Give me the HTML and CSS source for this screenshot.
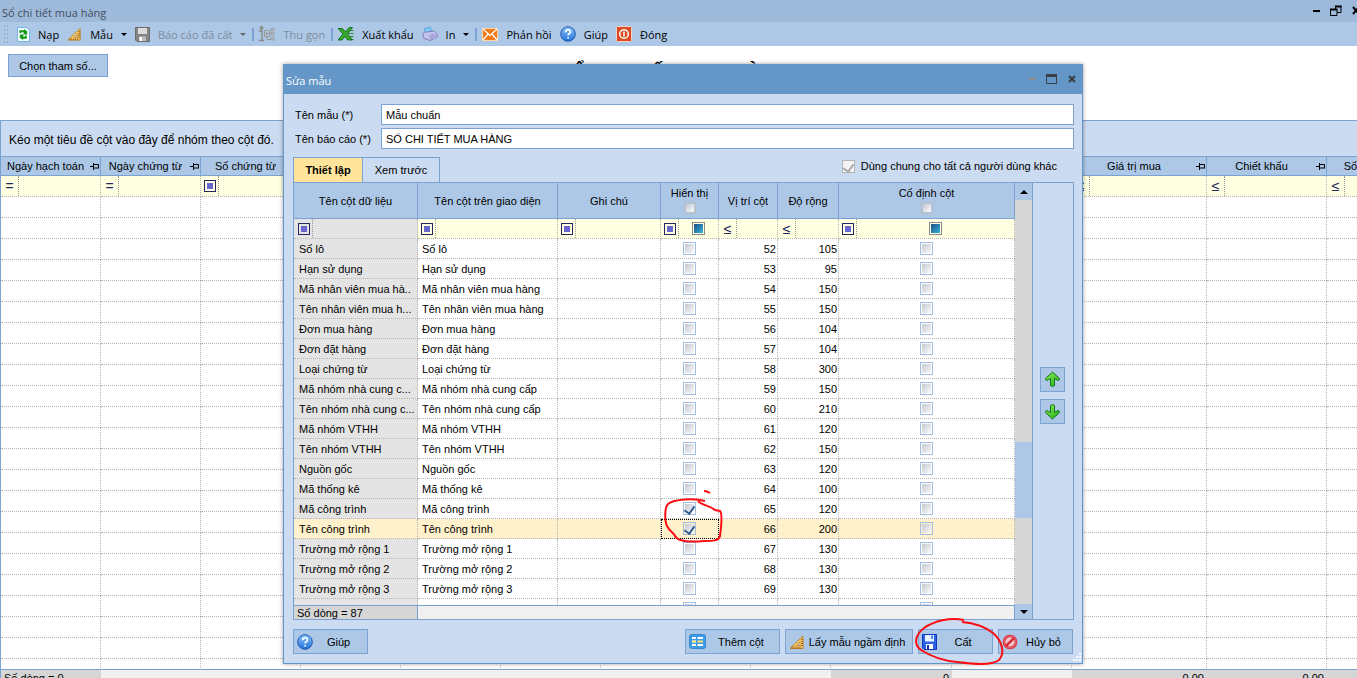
FILE: index.html
```
<!DOCTYPE html>
<html lang="vi">
  <head>
    <meta charset="utf-8">
    <link rel="stylesheet" href="styles.css">
    <title>Sổ chi tiết mua hàng</title>
  </head>
  <body>
    <svg class="defs">
      <linearGradient id="blueBall" x1="0" y1="0" x2="0" y2="1"><stop offset="0" stop-color="#8cc4ff"/><stop offset="1" stop-color="#2272d8"/></linearGradient>
      <linearGradient id="green" x1="0" y1="0" x2="1" y2="1"><stop offset="0" stop-color="#8df05a"/><stop offset="1" stop-color="#18b010"/></linearGradient>
      <symbol id="help" viewBox="0 0 16 16">
        <circle cx="8" cy="8" r="7.3" fill="url(#blueBall)" stroke="#2058a8"/>
        <path d="M5.7 6.2Q5.8 3.8 8.1 3.8T10.4 5.9Q10.4 7 9.1 7.8Q8.1 8.4 8.1 9.5M8.1 11V12.6" fill="none" stroke="#fff" stroke-width="1.6"/>
      </symbol>
      <symbol id="ruler" viewBox="0 0 16 16">
        <path d="M1 14.5L14 2V14.5Z" fill="#f8c765" stroke="#c08428"/>
        <path d="M7.500 11.500L11 8V11.500Z" fill="#c5d9f0" stroke="#b87820" stroke-width=".7"/>
        <path d="M3 14.500v-2M5 14.500v-2M7 14.500v-2M9 14.500v-2M11 14.500v-2M12 5.500h2M12 7.500h2M12 9.500h2M12 11.500h2" stroke="#8a5510" stroke-width=".8"/>
      </symbol>
      <symbol id="pin" viewBox="0 0 9 7">
        <path d="M0 3.5H3M3.5 0V7M3.5 1.5H8.5V5M3.5 5H9" fill="none" stroke="#000"/>
      </symbol>
    </svg>

    <div class="window">
      <header class="titlebar">
        <span>Sổ chi tiết mua hàng</span>
        <svg class="window-controls" width="44" height="12" viewBox="0 0 44 12">
          <path d="M0 6h7" stroke="#000" stroke-width="2"/>
          <path d="M22.5 5V1.5H28M28 0.5V7.5H24M17.5 4.5H24V10.5H17.5Z" fill="none" stroke="#000"/>
          <path d="M17 4.500H24.500M22 1.500H28.500" stroke="#000" stroke-width="2"/>
          <path d="M40 2l6 7M46 2l-6 7" stroke="#000" stroke-width="2"/>
        </svg>
      </header>

      <nav class="toolbar">
        <span class="grip"></span>
        <button class="tool">
          <svg width="13" height="15" viewBox="0 0 14 16"><path d="M.5.500H10.500L13.500 3.500V15.500H.5Z" fill="#f5fbff" stroke="#6eaedb"/><path d="M3.500 6.500V4.500H8M5 11.500H9.500V9" fill="none" stroke="#159b18" stroke-width="2"/><path d="M7.500 2L11 4.500V8H7ZM6.500 14L3 11.500V8H7Z" fill="#159b18"/></svg>
          Nạp
        </button>
        <button class="tool">
          <svg width="15" height="16"><use href="#ruler"/></svg>
          Mẫu <i class="caret"></i>
        </button>
        <button class="tool" disabled>
          <svg width="15" height="16" viewBox="0 0 15 16"><path d="M.5 1.500H14.500V15.500H2L.5 14Z" fill="#858585" stroke="#6c6c6c"/><path d="M3 2H12V8H3Z" fill="#dcdcdc"/><path d="M4 10.500H11V15H4Z" fill="#bbb"/><path d="M4.500 11H7V15H4.500Z" fill="#fff"/></svg>
          Báo cáo đã cất <i class="caret"></i>
        </button>
        <span class="separator"></span>
        <button class="tool" disabled>
          <svg width="16" height="16" viewBox="0 0 16 16"><path d="M0 5H3V14M0 14.500H5M1.500 1H3.500V3H1.500Z" fill="none" stroke="#888" stroke-width="1.400"/><path d="M5.500 4.500H10.500V10.500H5.500ZM6.500 7.500H9.500M8 6V9M11 7.500H12M8 10.500V13.500H12M12 2.500H15V5H12ZM12 6.500H15V9H12ZM12 11.500H15V14H12Z" fill="none" stroke="#999"/></svg>
          Thu gọn
        </button>
        <span class="separator"></span>
        <button class="tool">
          <svg width="16" height="16" viewBox="0 0 16 16"><path d="M9 4.500H15.500M9 7.500H15.500M10 10.500H15.500M9 13.500H15.500" stroke="#2f8c34"/><path d="M0 2.500H4.500L7.500 6 11 1.500H14.500L9.500 8 14.500 14H9.500L7 10.500 4 14H0L5 8Z" fill="#35a82d" stroke="#0d6315" stroke-width=".8"/></svg>
          Xuất khẩu
        </button>
        <button class="tool">
          <svg width="16" height="16" viewBox="0 0 16 16"><path d="M2 3L8 .8 10 5 4 8Z" fill="#7ecbf5" stroke="#4b9ed6" stroke-width=".7"/><path d="M.8 8Q2 5 5 6L12 5Q16 7 15.300 11L8 14.500 2 12.500Z" fill="#c5c4ec" stroke="#8080bd"/><path d="M7 9Q11 6 14.500 9V12L8 14Z" fill="#a9a7db"/></svg>
          In <i class="caret"></i>
        </button>
        <span class="separator"></span>
        <button class="tool">
          <svg width="16" height="13" viewBox="0 0 16 13"><path d="M.5.500H15.500V12.500H.5Z" fill="#f47a18" stroke="#ffd6a8"/><path d="M1 1L8 7.500 15 1M1 12L6 6M15 12L10 6" fill="none" stroke="#fff" stroke-width="1.200"/></svg>
          Phản hồi
        </button>
        <button class="tool">
          <svg width="16" height="16"><use href="#help"/></svg>
          Giúp
        </button>
        <button class="tool">
          <svg width="16" height="16" viewBox="0 0 16 16"><rect x=".5" y=".5" width="15" height="15" rx="1" fill="#dc4a24" stroke="#f5d3c8"/><circle cx="8" cy="8" r="4.300" fill="none" stroke="#fff" stroke-width="1.500"/><path d="M8 5.500v5" stroke="#fff" stroke-width="1.500"/></svg>
          Đóng
        </button>
      </nav>

      <section class="report-head">
        <button class="btn btn-params">Chọn tham số...</button>
        <h1>SỔ CHI TIẾT MUA HÀNG</h1>
      </section>

      <main class="report">
        <p class="group-hint">Kéo một tiêu đề cột vào đây để nhóm theo cột đó.</p>
        <div class="report-grid">
          <table class="grid back-grid">
            <colgroup id="backCols"></colgroup>
            <thead id="backHead"></thead>
            <tbody id="backBody"></tbody>
          </table>
        </div>
        <div class="report-totals">
          <table class="back-totals">
            <tbody><tr id="backTotals"></tr></tbody>
          </table>
        </div>
      </main>
    </div>

    <div class="dialog" role="dialog" aria-labelledby="dialogTitle">
      <header class="dialog-title">
        <span id="dialogTitle">Sửa mẫu</span>
        <svg width="50" height="12" viewBox="0 0 50 12">
          <path d="M1 6h7" stroke="#8c8c8c" stroke-width="2"/>
          <path d="M18.500 1.500H28.500V10.500H18.500Z" fill="none" stroke="#3b4048"/>
          <path d="M18 2.500H29" stroke="#3b4048" stroke-width="3"/>
          <path d="M41 3l6 6M47 3l-6 6" stroke="#3b4048" stroke-width="2.200"/>
        </svg>
      </header>

      <form class="fields">
        <label for="templateName">Tên mẫu (*)</label>
        <input id="templateName" type="text" value="Mẫu chuẩn">
        <label for="reportName">Tên báo cáo (*)</label>
        <input id="reportName" type="text" value="SỔ CHI TIẾT MUA HÀNG">
      </form>

      <div class="tabs">
        <button class="tab active">Thiết lập</button>
        <button class="tab">Xem trước</button>
        <label class="share"><input type="checkbox" class="check" checked disabled> Dùng chung cho tất cả người dùng khác</label>
      </div>

      <div class="panel">
        <div class="list">
          <div class="list-scroll">
            <table class="grid list-grid">
              <colgroup>
                <col class="w-data"><col class="w-label"><col class="w-note"><col class="w-show"><col class="w-pos"><col class="w-width"><col>
              </colgroup>
              <thead>
                <tr class="heads">
                  <th>Tên cột dữ liệu</th>
                  <th>Tên cột trên giao diện</th>
                  <th>Ghi chú</th>
                  <th><label>Hiển thị<input type="checkbox" class="check"></label></th>
                  <th>Vị trí cột</th>
                  <th>Độ rộng</th>
                  <th><label>Cố định cột<input type="checkbox" class="check"></label></th>
                </tr>
                <tr class="filters">
                  <td class="locked"><span class="op"><i class="box"></i></span></td>
                  <td><span class="op"><i class="box"></i></span></td>
                  <td><span class="op"><i class="box"></i></span></td>
                  <td><div class="filter"><span class="op"><i class="box"></i></span><i class="mixed"></i></div></td>
                  <td><span class="op">≤</span></td>
                  <td><span class="op">≤</span></td>
                  <td><div class="filter"><span class="op"><i class="box"></i></span><i class="mixed"></i></div></td>
                </tr>
              </thead>
              <tbody id="listBody"></tbody>
            </table>
          </div>
          <div class="list-total"><span>Số dòng = 87</span></div>
        </div>
        <div class="scrollbar">
          <button class="arrow" aria-label="Lên"><i class="tri up"></i></button>
          <div class="track"><div class="thumb"></div></div>
          <button class="arrow arrow-down" aria-label="Xuống"><i class="tri"></i></button>
        </div>
        <div class="movers">
          <button class="btn" aria-label="Chuyển lên">
            <svg width="17" height="17" viewBox="0 0 17 17"><path d="M8.500 1L15.500 7.500Q16 9 14 9.500L10.500 7.500V14.500Q8.500 16.500 6.500 14.500V7.500L3 9.500Q1 9 1.500 7.500Z" fill="url(#green)" stroke="#16701a"/></svg>
          </button>
          <button class="btn" aria-label="Chuyển xuống">
            <svg width="17" height="17" viewBox="0 0 17 17"><path d="M8.500 16L1.500 9.500Q1 8 3 7.500L6.500 9.500V2.500Q8.500 .5 10.500 2.500V9.500L14 7.500Q16 8 15.500 9.500Z" fill="url(#green)" stroke="#16701a"/></svg>
          </button>
        </div>
      </div>

      <footer class="actions">
        <button class="btn action help"><svg width="16" height="16"><use href="#help"/></svg><span>Giúp</span></button>
        <button class="btn action add">
          <svg width="17" height="15" viewBox="0 0 17 15"><rect x=".5" y=".5" width="16" height="14" rx="2" fill="#3d9be6" stroke="#3688d0"/><path d="M3 3H7V5H3ZM3 6.500H7V8.500H3ZM3 10H7V12H3ZM8.500 3H14V5H8.500ZM8.500 10H14V12H8.500Z" fill="#fff"/><path d="M3 6.500H7V8.500H3ZM8.500 6.500H14V8.500H8.500Z" fill="#ffe37a"/></svg>
          <span>Thêm cột</span>
        </button>
        <button class="btn action default"><svg width="16" height="16"><use href="#ruler"/></svg><span>Lấy mẫu ngầm định</span></button>
        <button class="btn action">
          <svg width="15" height="16" viewBox="0 0 15 16"><path d="M.5.500H14.500V15.500H2L.5 14Z" fill="#2b62e8" stroke="#1438b4"/><path d="M3 1H12V7.500H3Z" fill="#e9f3ff"/><path d="M9 1.500H11V5H9Z" fill="#4f85ef"/><path d="M4 10H11V15H4Z" fill="#fff"/><path d="M5 11H7V15H5Z" fill="#1438b4"/></svg>
          <span>Cất</span>
        </button>
        <button class="btn action">
          <svg width="16" height="16" viewBox="0 0 16 16"><circle cx="8" cy="8" r="6" fill="#f0c8cf" stroke="#d92a38" stroke-width="2.600"/><path d="M3.800 12.200L12.200 3.800" stroke="#d92a38" stroke-width="2.600"/><circle cx="8" cy="8" r="6" fill="none" stroke="#f58a8e" stroke-width=".7"/></svg>
          <span>Hủy bỏ</span>
        </button>
      </footer>
      <svg class="resize" width="9" height="9"><path d="M7 1h2M4 4h2M7 4h2M1 7h2M4 7h2M7 7h2" stroke="#f5f8fc" stroke-width="2"/></svg>

      <!-- hand drawn marks over the dialog -->
      <svg class="marks" width="800" height="600" viewBox="283 64 800 600">
        <path d="M704 491Q707 491 710 493"/>
        <path d="M705 501C694 498 674 499 668 504C664 508 665 522 667 526C670 532 674 533 675 536C678 542 693 542 704 541C712 541 719 541 720 536C721 528 723 514 720 511L715 510C711 506 701 505 698 501"/>
        <path d="M964 620C950 617 934 621 924 628C914 636 914 645 921 650C932 657 945 661 957 662C973 664 991 666 999 660C1006 652 1001 640 993 633C984 626 973 623 962 622"/>
      </svg>
    </div>

    <script>
      const pin = '<svg class="pin" width="9" height="7"><use href="#pin"/></svg>';
      const box = '<i class="box"></i>';

      // width, heading, filter operator, total
      const backColumns = [
        [100, 'Ngày hạch toán', '=', 'Số dòng = 0'],
        [100, 'Ngày chứng từ', '='],
        [100, 'Số chứng từ', box],
        [100, '', '='],
        [100, '', box],
        [100, '', box],
        [150, '', box],
        [80, '', box],
        [121, '', '≤', '0'],
        [120, '', '≤'],
        [135, 'Giá trị mua', '≤', '0,00'],
        [120, 'Chiết khấu', '≤', '0,00'],
        [120, 'Số lượng trả lại', '≤']
      ];

      document.querySelector('#backCols').innerHTML = backColumns.map(c => `<col style="width: ${c[0]}px">`).join('');
      document.querySelector('#backHead').innerHTML =
        `<tr class="heads">${backColumns.map(c => `<th><div class="head"><span>${c[1]}</span>${pin}</div></th>`).join('')}</tr>` +
        `<tr class="filters">${backColumns.map(c => `<td><span class="op">${c[2]}</span></td>`).join('')}</tr>`;
      document.querySelector('#backBody').innerHTML = `<tr>${'<td></td>'.repeat(backColumns.length)}</tr>`.repeat(23);
      document.querySelector('#backTotals').innerHTML = backColumns.map((c, i) => `<td class="${c[3] || i === 12 ? 'sum' : ''}" style="width: ${c[0]}px">${c[3] || ''}</td>`).join('');

      // label, width, shown, short name for the narrow first column
      const rows = [
        ['Số lô', 105],
        ['Hạn sử dụng', 95],
        ['Mã nhân viên mua hàng', 150, false, 'Mã nhân viên mua hà..'],
        ['Tên nhân viên mua hàng', 150, false, 'Tên nhân viên mua h...'],
        ['Đơn mua hàng', 104],
        ['Đơn đặt hàng', 104],
        ['Loại chứng từ', 300],
        ['Mã nhóm nhà cung cấp', 150, false, 'Mã nhóm nhà cung c...'],
        ['Tên nhóm nhà cung cấp', 210, false, 'Tên nhóm nhà cung c...'],
        ['Mã nhóm VTHH', 120],
        ['Tên nhóm VTHH', 150],
        ['Nguồn gốc', 120],
        ['Mã thống kê', 100],
        ['Mã công trình', 120, true],
        ['Tên công trình', 200, true],
        ['Trường mở rộng 1', 130],
        ['Trường mở rộng 2', 130],
        ['Trường mở rộng 3', 130],
        ['', '']
      ];

      document.querySelector('#listBody').innerHTML = rows.map(([name, width, shown, short], i) => `
        <tr class="${name === 'Tên công trình' ? 'selected' : ''}">
          <td class="locked">${short || name}</td>
          <td>${name}</td>
          <td></td>
          <td class="tick"><input type="checkbox" class="check" aria-label="Hiển thị" ${shown ? 'checked' : ''}></td>
          <td class="num">${name && 52 + i}</td>
          <td class="num">${width}</td>
          <td class="tick"><input type="checkbox" class="check" aria-label="Cố định cột"></td>
        </tr>`).join('');
    </script>
  </body>
</html>
```
FILE: styles.css
```
* {
  box-sizing: border-box;
}
body {
  margin: 0;
  height: 100vh;
  overflow: hidden;
  position: relative;
  background: #fff;
  color: #000;
  font-family: "Liberation Sans", Arial, sans-serif;
  font-size: 11px;
}
button, input {
  font: inherit;
  color: inherit;
  margin: 0;
}
.defs {
  position: absolute;
  width: 0;
  height: 0;
}

/* main window */
.window {
  height: 100%;
  display: flex;
  flex-direction: column;
}
.titlebar {
  height: 22px;
  flex: none;
  display: flex;
  justify-content: space-between;
  align-items: center;
  padding-left: 2px;
  overflow: hidden;
  background: #9dbada;
  color: #454f5e;
  font-family: "Open Sans", sans-serif;
}
.titlebar span {
  padding-top: 2px;
}
.toolbar {
  height: 24px;
  flex: none;
  display: flex;
  align-items: center;
  padding-left: 3px;
  background: #adc8e7;
  font-family: "Open Sans", sans-serif;
}
.grip {
  width: 6px;
  height: 20px;
  margin-right: 5px;
  background: radial-gradient(#8fa9c6 1px, transparent 1px) 0 0 / 3px 4px;
}
.tool {
  display: flex;
  align-items: center;
  gap: 8px;
  padding: 0 5px 0 3px;
  border: 0;
  background: none;
  white-space: nowrap;
}
.tool:disabled {
  color: #808b99;
}
.caret {
  border: 3px solid transparent;
  border-top-color: #000;
  border-bottom: 0;
}
.tool:disabled .caret {
  border-top-color: #666;
}
.separator {
  width: 2px;
  height: 13px;
  margin: 0 2px 0 1px;
  background: #7ba2d2;
}

.btn {
  border: 1px solid #7ba2d0;
  background: #adc8e7;
  padding: 0;
}
.report-head {
  height: 74px;
  flex: none;
  display: grid;
  grid-template-columns: 1fr auto 1fr;
  align-items: start;
  padding: 8px 16px 8px 8px;
}
.btn-params {
  width: 100px;
  height: 23px;
}
.report-head h1 {
  margin: 8px 0 0;
  font-size: 20px;
  line-height: 20px;
}

.report {
  flex: 1;
  min-height: 0;
  display: flex;
  flex-direction: column;
  border-top: 1px solid #7ba2d0;
  border-left: 1px solid #7ba2d0;
}
.group-hint {
  margin: 0;
  height: 35px;
  flex: none;
  padding: 0 8px;
  line-height: 38px;
  font-size: 12px;
  background: #cbdbf1;
}
.report-grid {
  flex: 1;
  min-height: 0;
  overflow: hidden;
}

/* shared grid look */
.grid {
  table-layout: fixed;
  border-collapse: separate;
  border-spacing: 0;
}
.grid th {
  padding: 0;
  font-weight: normal;
  background: #adc8e7;
  border-right: 1px solid #7ba2d0;
  border-bottom: 1px solid #7ba2d0;
}
.grid td {
  padding: 0;
  border-right: 1px dotted #b4b4b4;
  border-bottom: 1px dotted #b4b4b4;
  white-space: nowrap;
  overflow: hidden;
}
.grid .filters td {
  background: #ffffe1;
}
.op {
  display: flex;
  align-items: center;
  justify-content: center;
  width: 18px;
  height: 100%;
  border-right: 1px dotted #999;
  color: #262660;
  font-size: 14px;
  line-height: 14px;
}
.box {
  width: 12px;
  height: 12px;
  border: 1px solid #262660;
  background: #6666cc content-box;
  padding: 2px;
}

.back-grid {
  width: 1446px;
}
.back-grid th {
  height: 20px;
  border-top: 1px solid #7ba2d0;
}
.back-grid td {
  height: 21px;
}
.head {
  display: flex;
  align-items: center;
  padding-right: 1px;
}
.head span {
  flex: 1;
}
.report-totals {
  height: 9px;
  flex: none;
  overflow: hidden;
  border-top: 1px solid #7ba2d0;
  background: #f0f0f0;
}
.back-totals {
  width: 1446px;
  table-layout: fixed;
  border-spacing: 0;
}
.back-totals td {
  height: 20px;
  padding: 2px 3px 0;
  text-align: right;
  vertical-align: top;
}
.back-totals .sum {
  background: #d6d6d6;
}
.back-totals td:first-child {
  text-align: left;
}

/* dialog */
.dialog {
  position: absolute;
  left: 283px;
  top: 64px;
  width: 800px;
  height: 600px;
  display: flex;
  flex-direction: column;
  border: 1px solid #6496c8;
  background: #cbdbf1;
  box-shadow: 0 0 4px rgba(0, 0, 0, 0.4);
}
.dialog-title {
  height: 29px;
  flex: none;
  display: flex;
  justify-content: space-between;
  align-items: center;
  padding: 0 4px 2px 2px;
  background: #6496c8;
  color: #fff;
  font-family: "Open Sans", sans-serif;
}
.dialog-title span {
  padding-top: 3px;
}
.fields {
  display: grid;
  grid-template-columns: 82px 1fr;
  gap: 3px 4px;
  align-items: center;
  padding: 10px 8px 0 11px;
  white-space: nowrap;
}
.fields input {
  height: 21px;
  padding: 0 4px;
  border: 1px solid #7ba2d0;
  background: #fff;
}
.tabs {
  display: flex;
  margin: 8px 8px 0 9px;
}
.tab {
  height: 25px;
  padding: 0;
  width: 77px;
  border: 1px solid #7ba2d0;
  border-bottom: 0;
  border-left: 0;
  background: #cbdbf1;
}
.tab.active {
  width: 70px;
  border-left: 1px solid #7ba2d0;
  background: #ffe59c;
  font-weight: bold;
}
.share {
  margin-left: auto;
  margin-right: 17px;
  display: flex;
  align-items: center;
  gap: 6px;
  height: 18px;
}
.check {
  appearance: none;
  flex: none;
  display: grid;
  place-items: center;
  width: 13px;
  height: 13px;
  border: 1px solid #a3bde0;
  background: linear-gradient(135deg, #c4c8d0, #fafafa) content-box #fff;
  padding: 1px;
}
.check:checked::before {
  content: "";
  width: 5px;
  height: 8px;
  margin-bottom: 2px;
  border: solid #355d94;
  border-width: 0 2px 2px 0;
  transform: rotate(35deg);
}
.check:disabled {
  border-color: #b4b4b4;
  background: #f4f4f4;
}
.check:disabled::before {
  border-color: #a8a8a8;
}

.panel {
  flex: 1;
  min-height: 0;
  display: flex;
  margin: 0 8px 0 9px;
  border: 1px solid #7ba2d0;
}
.list {
  flex: 1;
  min-width: 0;
  display: flex;
  flex-direction: column;
}
.list-scroll {
  flex: 1;
  min-height: 0;
  overflow: hidden;
  background: #fff;
}
.list-grid {
  width: 100%;
}
.w-data {
  width: 124px;
}
.w-label {
  width: 140px;
}
.w-note {
  width: 103px;
}
.w-show {
  width: 58px;
}
.w-pos {
  width: 59px;
}
.w-width {
  width: 61px;
}
.list-grid th {
  height: 36px;
}
.list-grid th label {
  display: flex;
  flex-direction: column;
  align-items: center;
  gap: 3px;
}
.list-grid th .check {
  width: 12px;
  height: 12px;
  border-color: #bdbdbd;
}
.list-grid td {
  height: 20px;
  padding: 0 4px;
}
.list-grid td.locked {
  padding: 0 0 0 5px;
  background: #e4e4e4;
}
.list-grid .filters td {
  padding: 0;
}
.list-grid .filters td.locked {
  padding-left: 1px;
  background: #e4e4e4;
}
.list-grid td.num {
  padding: 0 1px;
  text-align: right;
}
.tick .check {
  margin: 0 auto;
}
.filter {
  display: flex;
  align-items: center;
  height: 100%;
}
.mixed {
  width: 13px;
  height: 13px;
  margin: 0 auto;
  border: 1px solid #8a8a8a;
  padding: 1px;
  background: linear-gradient(135deg, #1c4f80, #35b4dd) content-box #fff;
}
.list-grid .selected td:not(.locked), .list-grid .selected .locked {
  background: #fff1cb;
}
.list-grid .selected td:nth-child(4) {
  outline: 1px dotted #000;
  outline-offset: -1px;
}
.list-total {
  height: 14px;
  flex: none;
  display: flex;
  border-top: 1px solid #7ba2d0;
  border-right: 1px solid #7ba2d0;
  background: #f0f0f0;
}
.list-total span {
  width: 124px;
  padding-left: 3px;
  line-height: 14px;
  background: #d6d6d6;
  border-right: 1px solid #7ba2d0;
}

.scrollbar {
  width: 17px;
  display: flex;
  flex-direction: column;
}
.arrow {
  height: 17px;
  flex: none;
  display: grid;
  place-items: center;
  border: 0;
  padding: 0;
  background: #adc8e7;
}
.arrow-down {
  height: 15px;
}
.tri {
  border: 4px solid transparent;
  border-top-color: #000;
  border-bottom: 0;
}
.tri.up {
  border-top: 0;
  border-bottom: 4px solid #000;
}
.track {
  flex: 1;
  padding-top: 242px;
  background: #d6d6d6;
}
.thumb {
  height: 76px;
  background: #adc8e7;
}
.movers {
  width: 41px;
  display: flex;
  flex-direction: column;
  justify-content: center;
  align-items: center;
  gap: 7px;
  border-left: 1px solid #7ba2d0;
  padding: 0 2px 12px 0;
}
.movers .btn {
  width: 25px;
  height: 25px;
  display: grid;
  place-items: center;
}

.actions {
  display: flex;
  gap: 5px;
  padding: 9px;
}
.action {
  width: 75px;
  height: 25px;
  display: flex;
  align-items: center;
  padding: 0 3px;
  white-space: nowrap;
}
.action span {
  flex: 1;
  text-align: center;
}
.action.help {
  margin-right: auto;
}
.action.add {
  width: 95px;
}
.action.default {
  width: 128px;
}
.resize {
  position: absolute;
  right: 1px;
  bottom: 1px;
}
.marks {
  position: absolute;
  left: -1px;
  top: -1px;
  pointer-events: none;
  overflow: visible;
  fill: none;
  stroke: #fb0d12;
  stroke-width: 2;
}
```
